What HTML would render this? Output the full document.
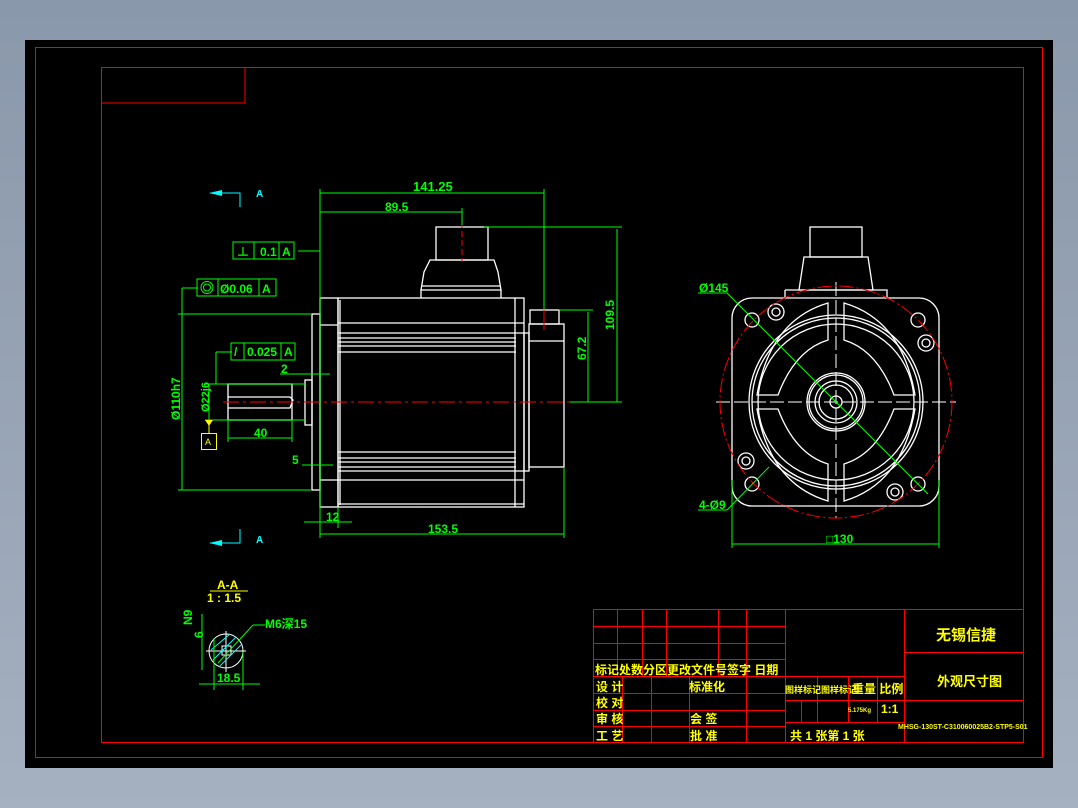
<!DOCTYPE html>
<html><head><meta charset="utf-8"><style>
html,body{margin:0;padding:0;background:#8a98ab;}
svg{display:block;}
text{font-family:"Liberation Sans","Noto Sans CJK SC",sans-serif;}
.w{stroke:#fff;fill:none;stroke-width:1.3}
.g{stroke:#0f0;fill:none;stroke-width:1}
.r{stroke:#f00;fill:none;stroke-width:1}
.gt{fill:#0f0;font-size:12px;font-family:"Liberation Mono",monospace;font-weight:bold}
.yt{fill:#ff0;font-size:12px;font-weight:bold}
</style></head><body>
<svg width="1078" height="808" viewBox="0 0 1078 808">
<defs><linearGradient id="bg" x1="0" y1="0" x2="0" y2="1"><stop offset="0" stop-color="#8a98ab"/><stop offset="1" stop-color="#a5b0c0"/></linearGradient></defs>
<rect width="1078" height="808" fill="url(#bg)"/>
<rect x="25" y="40" width="1028" height="728" fill="#000"/>
<rect x="35.5" y="47.5" width="1007" height="710" class="r"/>
<rect x="101.5" y="67.5" width="922" height="675" class="r"/>
<rect x="101.5" y="67.5" width="143.5" height="35.5" class="r"/>

<!-- side view -->
<g class="w">
<rect x="338" y="298" width="186" height="209"/>
<line x1="340" y1="300" x2="340" y2="505"/>
<line x1="515" y1="298" x2="515" y2="507"/>
<line x1="338" y1="323" x2="524" y2="323"/>
<line x1="338" y1="333" x2="524" y2="333"/>
<line x1="338" y1="338" x2="516" y2="338"/>
<line x1="338" y1="342" x2="516" y2="342"/>
<line x1="338" y1="346" x2="516" y2="346"/>
<line x1="338" y1="352" x2="516" y2="352"/>
<line x1="338" y1="452" x2="516" y2="452"/>
<line x1="338" y1="458" x2="516" y2="458"/>
<line x1="338" y1="462" x2="516" y2="462"/>
<line x1="338" y1="467" x2="516" y2="467"/>
<line x1="338" y1="471" x2="524" y2="471"/>
<line x1="338" y1="480" x2="524" y2="480"/>
<line x1="338" y1="504" x2="524" y2="504"/>
<rect x="320" y="298" width="18" height="209"/>
<line x1="320" y1="325" x2="338" y2="325"/>
<line x1="320" y1="480" x2="338" y2="480"/>
<rect x="312" y="314" width="8" height="176"/>
<rect x="305" y="380" width="7" height="45"/>
<rect x="228" y="384" width="64" height="36"/>
<path d="M228 397 H290 L293 400 L290 408 H228"/>
<rect x="524" y="333" width="5" height="138"/>
<rect x="529" y="324" width="35" height="143"/>
<line x1="529" y1="341" x2="564" y2="341"/>
<rect x="530" y="310" width="29" height="14"/>
<rect x="436" y="227" width="52" height="33"/>
<path d="M430 260 H494 L498 272 L501 290 H421 L424 272 Z"/>
<path d="M421 290 V298 M501 290 V298 M422 286 H500"/>
</g>
<line x1="223" y1="402" x2="570" y2="402" stroke="#f00" stroke-dasharray="16,4,3,4"/>
<line x1="462" y1="222" x2="462" y2="262" stroke="#f00" stroke-dasharray="6,3"/>
<line x1="544" y1="308" x2="544" y2="330" stroke="#f00"/>

<g class="g">
<line x1="320" y1="189" x2="320" y2="538"/>
<line x1="320" y1="193" x2="544" y2="193"/><line x1="544" y1="189" x2="544" y2="310"/>
<line x1="320" y1="212" x2="462" y2="212"/><line x1="462" y1="208" x2="462" y2="225"/>
<line x1="484" y1="227" x2="622" y2="227"/><line x1="617" y1="229" x2="617" y2="402"/>
<line x1="559" y1="310" x2="593" y2="310"/><line x1="588" y1="312" x2="588" y2="402"/>
<line x1="570" y1="402" x2="622" y2="402"/>
<line x1="564" y1="467" x2="564" y2="538"/><line x1="320" y1="534" x2="564" y2="534"/>
<line x1="338" y1="507" x2="338" y2="528"/><line x1="304" y1="522" x2="352" y2="522"/>
<line x1="178" y1="314" x2="312" y2="314"/><line x1="178" y1="490" x2="312" y2="490"/>
<line x1="182" y1="288" x2="182" y2="490"/><line x1="182" y1="288" x2="198" y2="288"/>
<line x1="205" y1="384" x2="305" y2="384"/><line x1="205" y1="420" x2="305" y2="420"/>
<line x1="209" y1="384" x2="209" y2="420"/>
<line x1="216" y1="352" x2="216" y2="384"/><line x1="216" y1="352" x2="232" y2="352"/>
<line x1="228" y1="420" x2="228" y2="442"/><line x1="292" y1="420" x2="292" y2="442"/>
<line x1="228" y1="438" x2="292" y2="438"/>
<line x1="280" y1="374" x2="330" y2="374"/>
<line x1="302" y1="465" x2="333" y2="465"/>
<line x1="298" y1="251" x2="320" y2="251"/>
<rect x="233" y="242" width="61" height="17"/><line x1="254" y1="242" x2="254" y2="259"/><line x1="279" y1="242" x2="279" y2="259"/>
<rect x="197" y="279" width="79" height="17"/><line x1="218" y1="279" x2="218" y2="296"/><line x1="259" y1="279" x2="259" y2="296"/>
<circle cx="207" cy="287.5" r="6"/><circle cx="207" cy="287.5" r="3.5"/>
<rect x="231" y="343" width="64" height="17"/><line x1="244" y1="343" x2="244" y2="360"/><line x1="281" y1="343" x2="281" y2="360"/>
</g>
<g class="gt">
<text x="413" y="191" font-size="13">141.25</text>
<text x="385" y="211">89.5</text>
<text x="326" y="521">12</text>
<text x="428" y="533">153.5</text>
<text x="254" y="437">40</text>
<text x="281" y="373">2</text>
<text x="292" y="464">5</text>
<text x="260" y="256">0.1</text><text x="282" y="256">A</text>
<text x="220" y="293">Ø0.06</text><text x="262" y="293">A</text>
<text x="247" y="356">0.025</text><text x="284" y="356">A</text>
<text x="237" y="256">⊥</text>
<text x="234" y="356">/</text>
<text transform="translate(180,420) rotate(-90)">Ø110h7</text>
<text transform="translate(209,412) rotate(-90)" font-size="11">Ø22j6</text>
<text transform="translate(614,330) rotate(-90)">109.5</text>
<text transform="translate(586,360) rotate(-90)">67.2</text>
</g>
<line x1="209" y1="420" x2="209" y2="433" stroke="#ff0"/>
<path d="M205 420 L213 420 L209 426Z" fill="#ff0"/>
<rect x="201.5" y="433.5" width="15" height="16" fill="none" stroke="#ff0"/>
<text x="205" y="445" font-size="9" fill="#ff0" font-family="Liberation Sans">A</text>

<!-- section arrows -->
<g stroke="#0ff" fill="none">
<path d="M210 193 H240 V207"/><path d="M210 543 H240 V529"/>
</g>
<path d="M209 193 L222 190 V196Z M209 543 L222 540 V546Z" fill="#0ff"/>
<text x="256" y="197" fill="#0ff" font-size="10" font-weight="bold">A</text>
<text x="256" y="543" fill="#0ff" font-size="10" font-weight="bold">A</text>

<!-- front view -->
<g class="w">
<rect x="732" y="298" width="207" height="208" rx="20"/>
<rect x="810" y="227" width="52" height="30"/>
<path d="M804 257 H868 L873 290 H799 Z"/>
<path d="M785 290 H887 V298 M785 290 V298"/>
<circle cx="836" cy="402" r="87"/><circle cx="836" cy="402" r="84"/><circle cx="836" cy="402" r="78"/>
<circle cx="836" cy="402" r="29"/><circle cx="836" cy="402" r="27"/><circle cx="836" cy="402" r="21"/><circle cx="836" cy="402" r="17"/><circle cx="836" cy="402" r="6"/>
<path d="M757 395 Q770 320 828 303 V340 Q795 350 778 395Z"/>
<path d="M915 395 Q902 320 844 303 V340 Q877 350 894 395Z"/>
<path d="M757 409 Q770 484 828 501 V464 Q795 454 778 409Z"/>
<path d="M915 409 Q902 484 844 501 V464 Q877 454 894 409Z"/>
<circle cx="776" cy="312" r="8"/><circle cx="776" cy="312" r="4"/>
<circle cx="926" cy="343" r="8"/><circle cx="926" cy="343" r="4"/>
<circle cx="746" cy="461" r="8"/><circle cx="746" cy="461" r="4"/>
<circle cx="895" cy="492" r="8"/><circle cx="895" cy="492" r="4"/>
<circle cx="752" cy="320" r="7"/><circle cx="918" cy="320" r="7"/>
<circle cx="752" cy="484" r="7"/><circle cx="918" cy="484" r="7"/>
</g>
<g stroke="#fff" stroke-dasharray="14,4">
<line x1="716" y1="402" x2="956" y2="402"/><line x1="836" y1="282" x2="836" y2="518"/>
</g>
<circle cx="836" cy="402" r="116" fill="none" stroke="#f00" stroke-dasharray="14,3,2,3"/>
<g class="g">
<line x1="698" y1="293" x2="727" y2="293"/><line x1="727" y1="293" x2="928" y2="494"/>
<line x1="698" y1="510" x2="727" y2="510"/><line x1="727" y1="510" x2="769" y2="467"/>
<line x1="732" y1="480" x2="732" y2="548"/><line x1="939" y1="480" x2="939" y2="548"/>
<line x1="732" y1="544" x2="939" y2="544"/>
</g>
<g class="gt"><text x="699" y="292">Ø145</text><text x="699" y="509">4-Ø9</text><text x="826" y="543">□130</text></g>

<!-- section A-A -->
<text x="217" y="589" class="yt">A-A</text>
<line x1="210" y1="591" x2="248" y2="591" stroke="#ff0"/>
<text x="207" y="602" class="yt">1 : 1.5</text>
<circle cx="226" cy="651" r="17" fill="none" stroke="#fff"/>
<g stroke="#fff"><line x1="206" y1="651" x2="246" y2="651"/><line x1="226" y1="631" x2="226" y2="672"/></g>
<rect x="222" y="646" width="9" height="9" fill="none" stroke="#fff"/>
<g stroke="#0ff"><line x1="213" y1="660" x2="236" y2="637"/><line x1="219" y1="667" x2="241" y2="645"/><line x1="211" y1="650" x2="230" y2="634"/></g>
<g class="g"><line x1="202" y1="614" x2="202" y2="670"/><line x1="214" y1="638" x2="214" y2="690"/><line x1="243" y1="652" x2="243" y2="690"/><line x1="199" y1="684" x2="260" y2="684"/><line x1="218" y1="663" x2="253" y2="625"/><line x1="253" y1="625" x2="265" y2="625"/></g>
<g class="gt"><text x="265" y="628">M6深15</text><text x="217" y="682">18.5</text><text transform="translate(192,625) rotate(-90)">N9</text><text transform="translate(203,638) rotate(-90)">6</text></g>

<!-- title block -->
<g class="r">
<rect x="593.5" y="609.5" width="430" height="133"/>
<path d="M593 626.5H785M593 643.5H785M593 659.5H785M593 676.5H904M593 693.5H785M593 710.5H785M593 726.5H785M785 700.5H1024M785 722.5H904M904 652.5H1024"/>
<path d="M617.5 609V676M642.5 609V676M666.5 609V676M718.5 609V676M746.5 609V743M785.5 609V743M904.5 609V743"/>
<path d="M622.5 676V743M651.5 676V743M689.5 676V743M817.5 676V722M848.5 676V722M877.5 676V722M801.5 700V722"/>
</g>
<g class="yt">
<text x="595" y="674" font-size="12">标记处数分区更改文件号签字 日期</text>
<text x="596" y="691">设 计</text><text x="689" y="691">标准化</text>
<text x="596" y="707">校 对</text>
<text x="596" y="723">审 核</text><text x="690" y="723">会 签</text>
<text x="596" y="740">工 艺</text><text x="690" y="740">批 准</text>
<text x="785" y="693" font-size="9">图样标记图样标记</text>
<text x="852" y="693">重量 比例</text>
<text x="848" y="712" font-size="6">5.175Kg</text>
<text x="881" y="713">1:1</text>
<text x="790" y="740">共 1 张第 1  张</text>
<text x="898" y="729" font-size="7">MHSG-130ST-C310060025B2-STP5-S01</text>
<text x="936" y="640" font-size="15">无锡信捷</text>
<text x="937" y="686" font-size="13">外观尺寸图</text>
</g>
</svg>
</body></html>
